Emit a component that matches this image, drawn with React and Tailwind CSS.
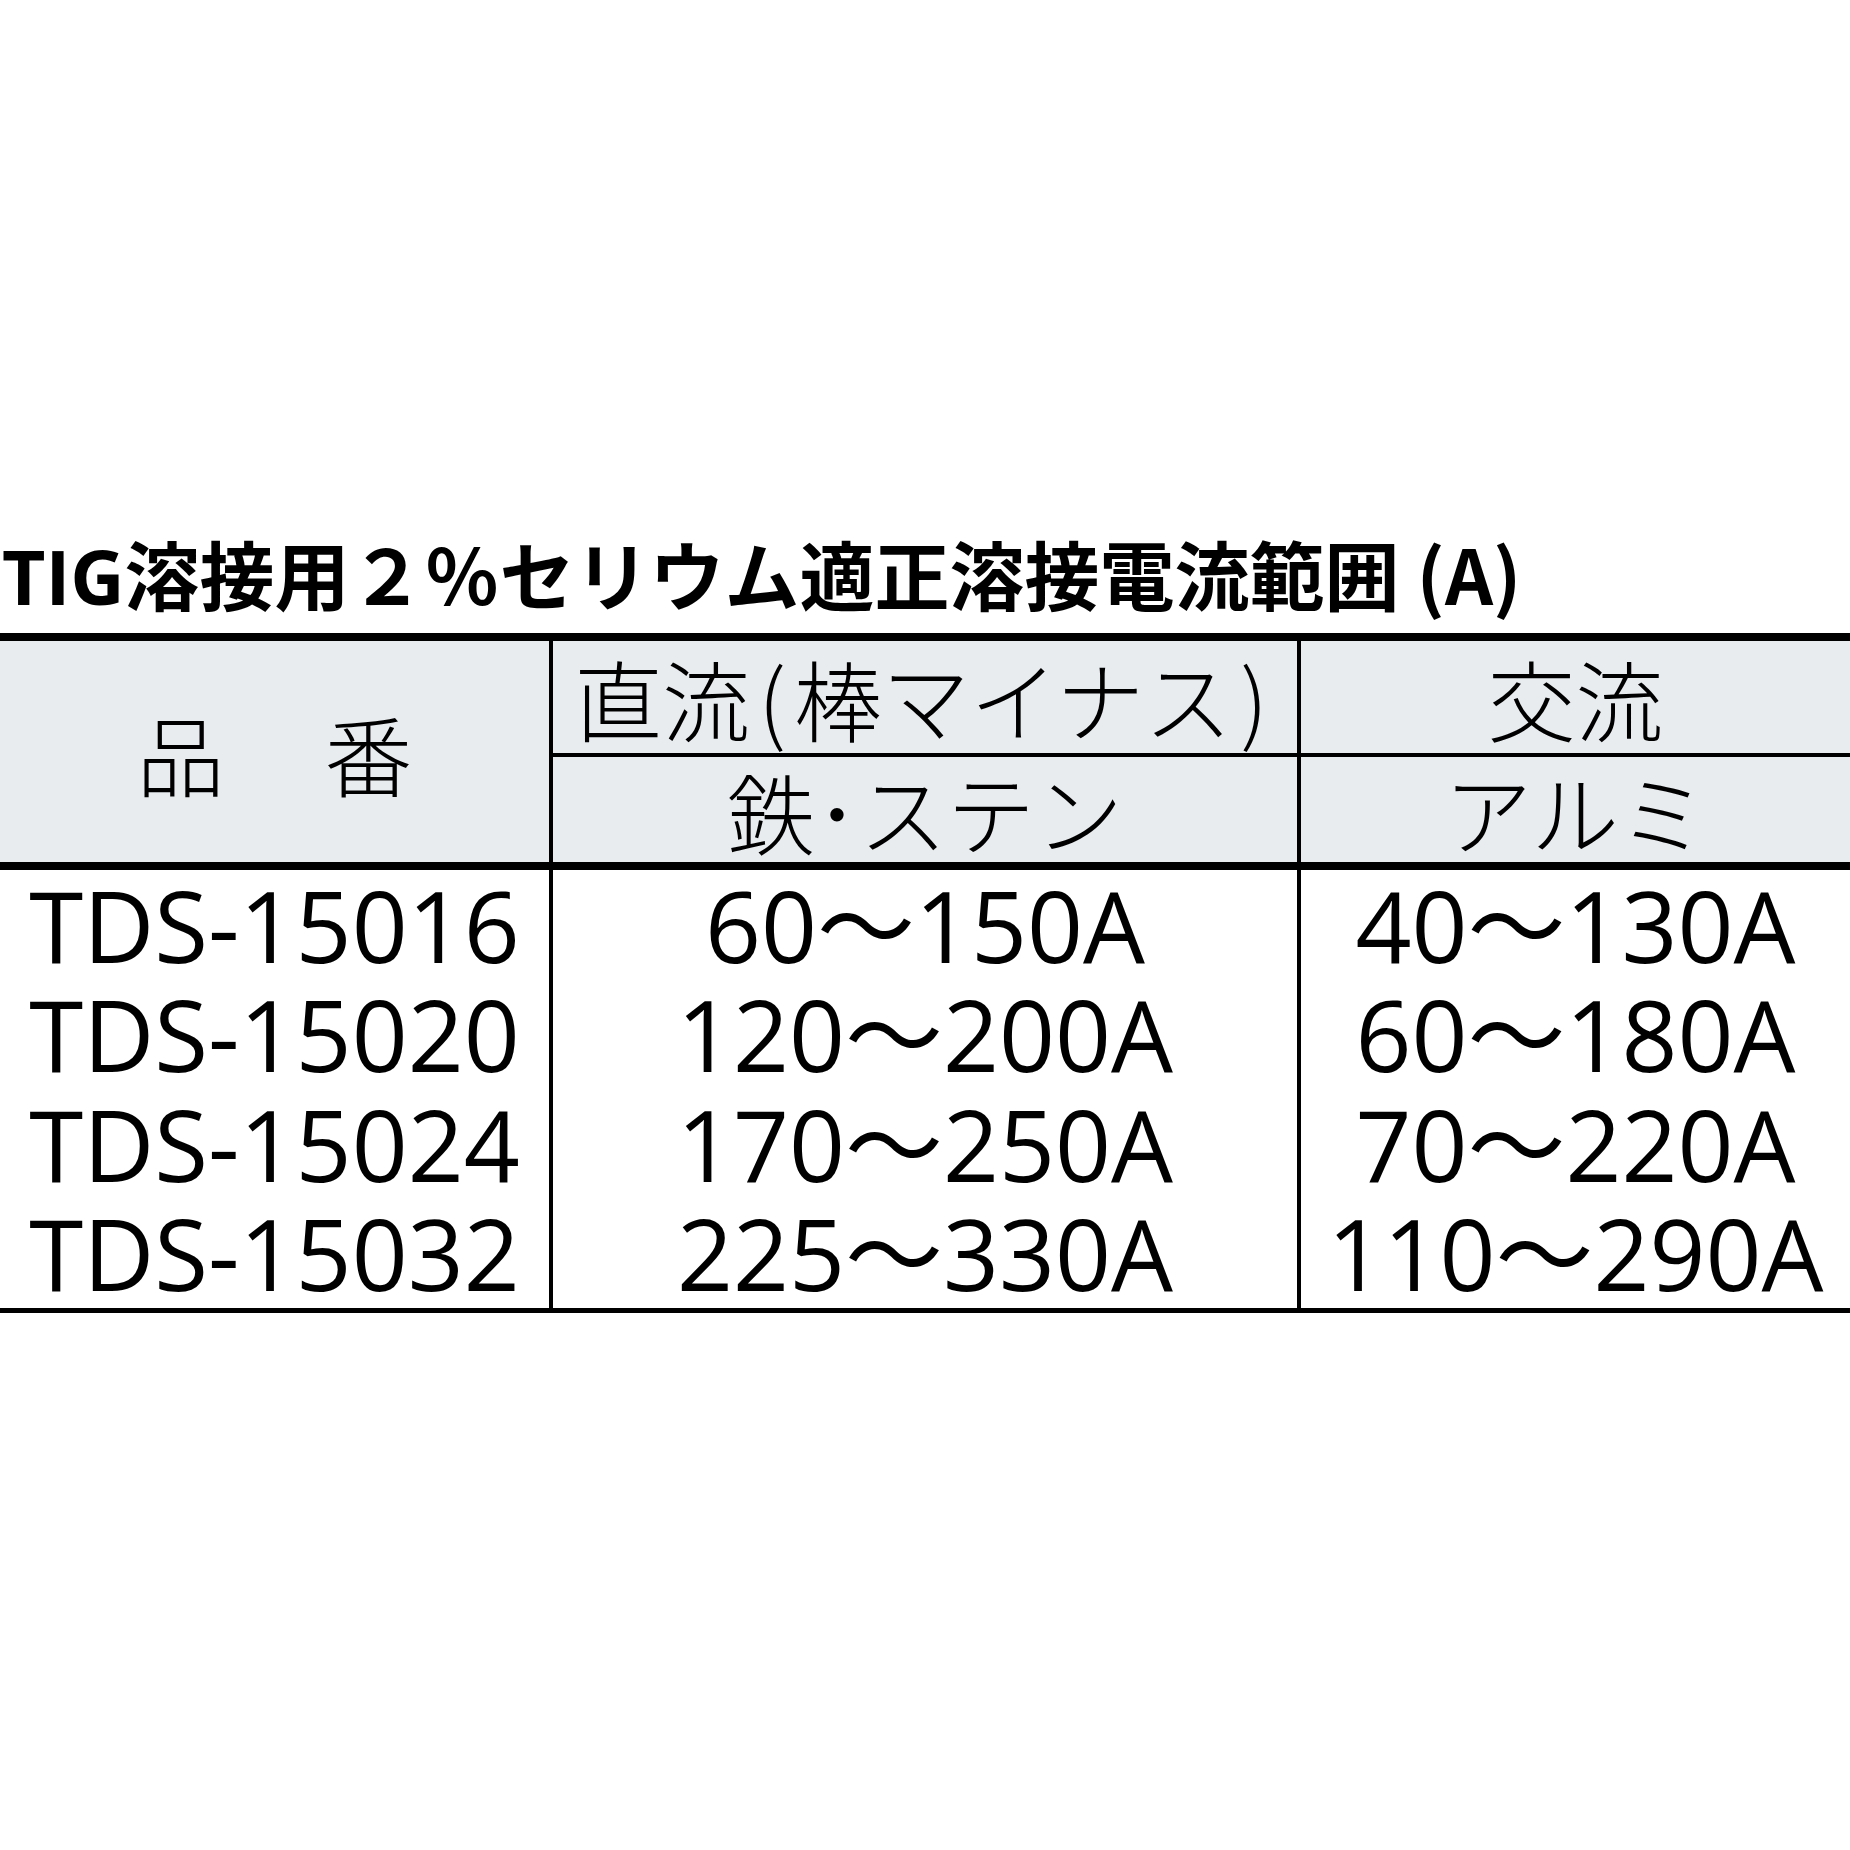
const rows = [
  ["TDS-15016", "60～150A", "40～130A"],
  ["TDS-15020", "120～200A", "60～180A"],
  ["TDS-15024", "170～250A", "70～220A"],
  ["TDS-15032", "225～330A", "110～290A"],
];

const jp = "font-['Noto_Sans_CJK_JP',sans-serif]";
const num = "font-['Open_Sans','Noto_Sans_CJK_JP',sans-serif]";

export default function App() {
  return (
    <div className="w-[1850px] h-[1850px] bg-white text-black pt-[535px]">
      {/* title */}
      <div className="h-[98px]">
        <div className={`${num} whitespace-nowrap pl-[2px] text-[75px] font-bold leading-none`}>
          TIG溶接用２％セリウム適正溶接電流範囲
          <span className={jp}> (A)</span>
        </div>
      </div>

      <div className="border-t-8 border-black">
        {/* header */}
        <div className={`${jp} grid grid-cols-[549px_748px_553px] bg-[#e9ecef] text-[88px] font-light leading-none`}>
          <div className="row-span-2 flex items-center justify-center gap-[100px]">
            <span>品</span>
            <span>番</span>
          </div>
          <div className="flex h-[112px] items-center justify-center border-l-4 border-black">
            直流<span className="px-[8px]">(</span>棒マイナス<span className="px-[8px]">)</span>
          </div>
          <div className="flex h-[112px] items-center justify-center border-l-4 border-black">
            交流
          </div>
          <div className="flex h-[109px] items-center justify-center border-l-4 border-t-4 border-black">
            鉄･ステン
          </div>
          <div className="flex h-[109px] items-center justify-center border-l-4 border-t-4 border-black">
            アルミ
          </div>
        </div>

        {/* body */}
        <div className={`${num} grid grid-cols-[549px_748px_553px] border-t-8 border-b-[5px] border-black text-[98px] leading-none`}>
          <div className="flex flex-col">
            {rows.map((r) => (
              <div key={r[0]} className="flex h-[109.5px] items-center justify-center whitespace-nowrap">
                {r[0]}
              </div>
            ))}
          </div>
          <div className="flex flex-col border-l-4 border-black">
            {rows.map((r) => (
              <div key={r[0]} className="flex h-[109.5px] items-center justify-center whitespace-nowrap">
                {r[1]}
              </div>
            ))}
          </div>
          <div className="flex flex-col border-l-4 border-black">
            {rows.map((r) => (
              <div key={r[0]} className="flex h-[109.5px] items-center justify-center whitespace-nowrap">
                {r[2]}
              </div>
            ))}
          </div>
        </div>
      </div>
    </div>
  );
}
